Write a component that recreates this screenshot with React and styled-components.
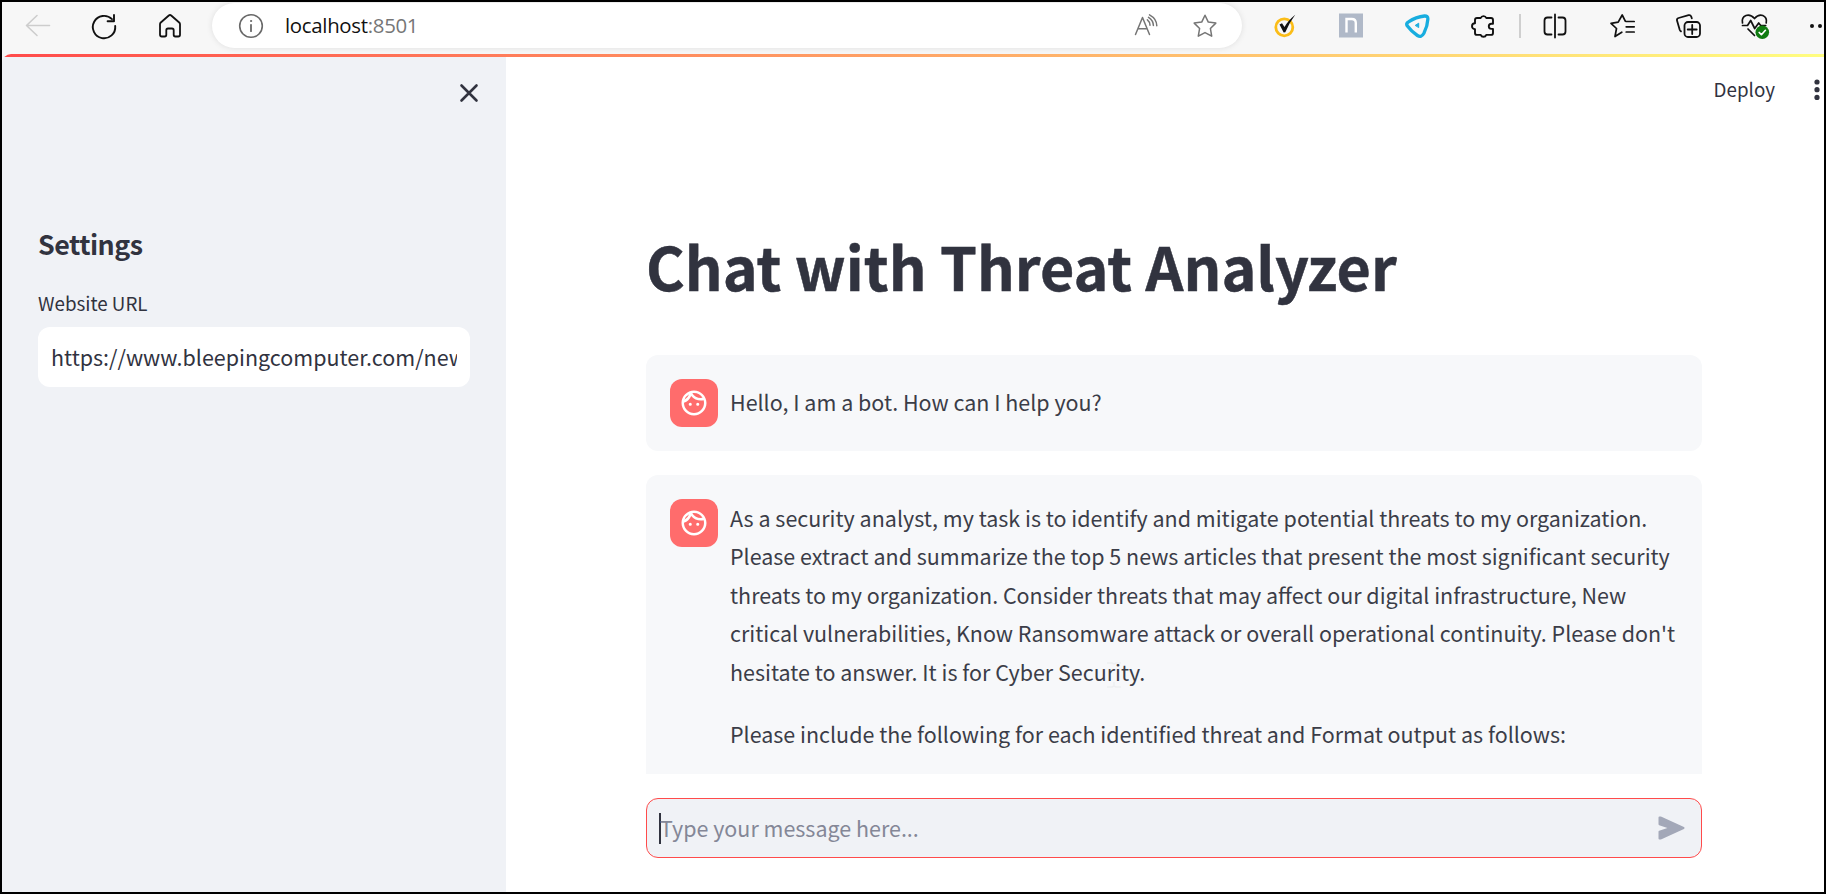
import React from "react";
import styled, { createGlobalStyle } from "styled-components";
import { MdOutlineFace } from "react-icons/md";

const GlobalStyle = createGlobalStyle`
  * { box-sizing: border-box; }
  body { margin: 0; background: #000; }
`;

const sans = `"Noto Sans CJK SC", "Noto Sans", sans-serif`;

const Window = styled.div`
  width: 1826px;
  height: 894px;
  border: 2px solid #000;
  background: #f7f7f7;
  display: flex;
  flex-direction: column;
  overflow: hidden;
  font-family: ${sans};
  color: #31333f;
`;

const Toolbar = styled.header`
  height: 52px;
  flex: none;
  display: flex;
  align-items: flex-start;
  padding-top: 1px;
  overflow: hidden;
`;

const NavButtons = styled.div`
  width: 210px;
  height: 45px;
  flex: none;
  display: flex;
  align-items: center;
  gap: 38px;
  padding-left: 22px;
`;

const AddressBar = styled.div`
  width: 1030px;
  height: 45px;
  flex: none;
  border-radius: 23px;
  background: #fff;
  box-shadow: 0 0 6px rgba(0, 0, 0, 0.1);
  display: flex;
  align-items: center;
  padding: 0 23px 0 25px;
`;

const Address = styled.span`
  flex: 1;
  padding: 0 0 2px 22px;
  font-family: "Open Sans", "Noto Sans", sans-serif;
  font-size: 20.4px;
  letter-spacing: -0.3px;
  line-height: 28px;
  color: #111;
`;

const Port = styled.span`
  color: #767676;
`;

const AddressActions = styled.div`
  display: flex;
  gap: 31px;
`;

const Extensions = styled.div`
  height: 45px;
  flex: none;
  display: flex;
  align-items: center;
  padding-left: 27px;
`;

const Slot = styled.span`
  width: ${(p) => p.$w || 66}px;
  flex: none;
  display: flex;
  justify-content: center;
`;

const Divider = styled.span`
  width: 2px;
  height: 24px;
  flex: none;
  margin-left: -13px;
  background: #cfcfcf;
`;

const Page = styled.div`
  flex: 1;
  min-height: 0;
  display: flex;
  flex-direction: column;
  border-top-left-radius: 9px;
  overflow: hidden;
  background: #fff;
`;

const Decoration = styled.div`
  height: 3px;
  flex: none;
  background: linear-gradient(90deg, #ff4b4b, #fffd80);
`;

const Body = styled.div`
  flex: 1;
  min-height: 0;
  display: flex;
`;

const Sidebar = styled.aside`
  width: 504px;
  flex: none;
  background: #f0f2f6;
  padding: 24px 36px 0;
`;

const CloseRow = styled.div`
  height: 24px;
  display: flex;
  justify-content: flex-end;
  margin-right: -8px;
`;

const SidebarTitle = styled.h2`
  margin: 121px 0 0;
  font-size: 26.8px;
  letter-spacing: -0.5px;
  line-height: 36px;
  font-weight: 600;
`;

const FieldLabel = styled.label`
  display: block;
  margin-top: 25px;
  font-size: 18.8px;
  line-height: 32px;
`;

const UrlField = styled.div`
  margin-top: 8px;
  height: 60px;
  border-radius: 12px;
  background: #fff;
  padding: 0 13px;
  display: flex;
  align-items: center;
`;

const UrlText = styled.div`
  overflow: hidden;
  white-space: nowrap;
  font-size: 21.48px;
  line-height: 34px;
`;

const Main = styled.main`
  flex: 1;
  min-width: 0;
  display: flex;
  flex-direction: column;
`;

const AppHeader = styled.div`
  height: 66px;
  flex: none;
  display: flex;
  align-items: center;
  justify-content: flex-end;
  padding-right: 2px;
`;

const Deploy = styled.span`
  font-size: 18.8px;
  line-height: 30px;
  margin-right: 38px;
  padding-bottom: 2px;
`;

const Column = styled.div`
  width: 1056px;
  height: 651px;
  flex: none;
  margin-left: 140px;
  overflow: hidden;
`;

const Title = styled.h1`
  margin: 0;
  height: 232px;
  padding-top: 102px;
  font-size: 59.15px;
  line-height: 80px;
  font-weight: 700;
  -webkit-text-stroke: 0.5px #31333f;
  white-space: nowrap;
`;

const Message = styled.section`
  position: relative;
  min-height: ${(p) => p.$minHeight || 96}px;
  margin-bottom: 24px;
  padding: 24px;
  border-radius: 12px;
  background: #f7f8fa;
  display: flex;
  gap: 12px;
`;

const Avatar = styled.div`
  width: 48px;
  height: 48px;
  flex: none;
  border-radius: 12px;
  background: #ff6c6c;
  color: #fff;
  display: flex;
  align-items: center;
  justify-content: center;
`;

const MessageBody = styled.div`
  margin-top: ${(p) => p.$offset}px;
  color: #3b3d48;
`;

const Paragraph = styled.p`
  margin: 0 0 24px;
  font-size: 21.48px;
  line-height: 38.4px;

  &:last-child { margin-bottom: 0; }
`;

const Line = styled.span`
  display: block;
  white-space: nowrap;
`;

const TextCursor = styled.svg`
  position: absolute;
  left: 461px;
  top: 187px;
`;

const ChatInput = styled.div`
  width: 1056px;
  height: 60px;
  flex: none;
  margin: 24px 0 0 140px;
  border: 1px solid #ff4b4b;
  border-radius: 12px;
  background: #f0f2f6;
  display: flex;
  align-items: center;
  padding: 0 16px 0 12px;
`;

const Caret = styled.span`
  width: 2px;
  height: 31px;
  background: #31333f;
`;

const Placeholder = styled.span`
  flex: 1;
  margin-left: -1px;
  font-size: 21.48px;
  line-height: 34px;
  color: #848797;
`;

function Icon({ w = 24, h = 24, children, color = "#111", sw = 1.6 }) {
  return (
    <svg width={w} height={h} viewBox={`0 0 ${w} ${h}`} fill="none" stroke={color} strokeWidth={sw}
      strokeLinecap="round" strokeLinejoin="round" overflow="visible">
      {children}
    </svg>
  );
}

const BackIcon = () => (
  <Icon w={28} color="#cdcdcd"><path d="M25.500 11.500H2.500M13 1.500 2.500 11.500 13 21.500" /></Icon>
);
const ReloadIcon = () => (
  <Icon w={28} sw={1.9}><path d="M22 5.200A11.200 11.200 0 1 0 25.200 12M24 1v6.300h-6.400" /></Icon>
);
const HomeIcon = () => (
  <Icon w={28} sw={1.8}>
    <path d="M4 10.200q0-1 .8-1.700l8-7q1.200-1 2.400 0l8 7q.8.700.8 1.700v10.600q0 1.700-1.700 1.700h-3q-1.600 0-1.600-1.700v-4.600q0-1.700-1.700-1.700h-4q-1.700 0-1.700 1.700v4.600q0 1.700-1.600 1.700h-3q-1.700 0-1.700-1.700z" />
  </Icon>
);
const InfoIcon = () => (
  <Icon w={26} h={26} color="#696969">
    <circle cx="14" cy="13" r="11.300" />
    <path d="M14 11.800v6.400" strokeWidth="1.800" />
    <circle cx="14" cy="8" r=".6" fill="#696969" strokeWidth="1" />
  </Icon>
);
const ReadAloudIcon = () => (
  <Icon color="#757575" sw={1.5}>
    <path d="M1.500 20.500 8.500 3.500l7 17M4 14.700h9M13.400 5.800q2.600 2 2.600 5.500M15.500.8q7.300 4 7.300 11M14.500 3.300q4.800 3 4.900 8.200" />
  </Icon>
);
const StarIcon = () => (
  <Icon color="#757575" sw={1.5}>
    <path d="m12 1.200 3.300 6.900 7.500 1-5.400 5.400 1.300 7.700-6.700-3.600-6.700 3.600 1.300-7.700-5.400-5.400 7.500-1z" />
  </Icon>
);
const CheckExtensionIcon = () => (
  <Icon>
    <circle cx="11.300" cy="13.300" r="8.500" stroke="#fbbd18" strokeWidth="2.800" />
    <path d="M6.500 10.500 9 9.300 11.500 13Q15 6.800 22.200.800 16 9.200 12.300 18.200L10.700 18.400Z" fill="#111" stroke="none" />
  </Icon>
);
const ArchExtensionIcon = () => (
  <svg width="24" height="25" viewBox="0 0 24 25">
    <rect width="24" height="25" fill="#b0b9c8" />
    <path d="M0 .5h24M0 24.500h24" stroke="#d3d8df" />
    <path d="M7.500 19.500V6h5.300q4 0 4 4v9.500" fill="none" stroke="#fff" strokeWidth="2.400" />
  </svg>
);
const TriangleExtensionIcon = () => (
  <Icon w={26} color="#18addf" sw={3.300}>
    <path d="M4.500 7.800Q12 2.800 20.500 2q3.400-.2 3.400 2.900-.300 7-4 14.400-2.600 4.700-6.500 2.200-6-4-10.200-9.700-1.400-2.300 1.300-4z" />
    <path d="m11.500 11.200 3.200-2v4z" fill="#18addf" strokeWidth="1" />
  </Icon>
);
const PuzzleIcon = () => (
  <Icon sw={1.900}>
    <path d="M6 4h3.700a3 3 0 0 1 5.600 0h4.700a2 2 0 0 1 2 2v3.700h-1.600a2.500 2.500 0 0 0 0 5.200h1.600v4a2 2 0 0 1-2 2h-4.700a3 3 0 0 1-5.600 0H6a2 2 0 0 1-2-2v-3.600a3 3 0 0 1 0-6V6a2 2 0 0 1 2-2z" />
  </Icon>
);
const SplitIcon = () => (
  <Icon sw={1.800}><path d="M12 .500v23M8.500 3.500h-4Q1.500 3.500 1.500 6.500v11q0 3 3 3h4M15.500 3.500h4q3 0 3 3v11q0 3-3 3h-4" /></Icon>
);
const FavoritesIcon = () => (
  <Icon sw={1.700}>
    <path d="M11.800 18.200 5 22.500l1.500-8L1 9.400l7.200-1.200L12.200 1l3.100 6.200M16.200 7.500h8M16.200 12.800h8M16.200 18h8" />
  </Icon>
);
const CollectionsIcon = () => (
  <Icon sw={1.800}>
    <rect x="8.500" y="8" width="15.500" height="15" rx="3.500" />
    <path d="M16.200 11v9M11.700 15.500h9M15.800 4.300 15.200 2.500q-.700-1.800-2.600-1.300L2.600 4q-2 .600-1.600 2.600l2.700 9.200q.400 1.100 1.300 1.600" />
  </Icon>
);
const HealthIcon = () => (
  <Icon w={28} h={26} sw={1.700}>
    <path d="M2.500 10Q1.300 4.400 6 2.500q4.500-1.500 8.500 3 4-4.500 8.300-3 4.600 2 3.400 7.500M2.500 12.500h5l3.200-5 4 8 4-5.500 2 2.500h5M8 16l6.500 6.500" />
    <circle cx="22.300" cy="19.300" r="6.800" fill="#0f7b10" stroke="none" />
    <path d="m19.200 19.500 2.200 2.200 4-4.400" stroke="#fff" />
  </Icon>
);
const MoreIcon = () => (
  <svg width="12" height="24" viewBox="0 0 12 24" fill="#111" overflow="visible">
    <circle cx="4" cy="12" r="2" /><circle cx="12" cy="12" r="2" />
  </svg>
);
const CloseIcon = () => (
  <Icon w={16} h={24} color="#31333f" sw={2.600}><path d="m.300 4.500 15 15M15.300 4.500l-15 15" transform="translate(-.8 0)" /></Icon>
);
const KebabIcon = () => (
  <svg width="9" height="24" viewBox="0 0 9 24" fill="#31333f">
    <circle cx="4" cy="4" r="2.600" /><circle cx="4" cy="11.700" r="2.600" /><circle cx="4" cy="19.400" r="2.600" />
  </svg>
);
const SendIcon = () => (
  <svg width="27" height="24" viewBox="0 0 27 24">
    <path d="M1.500 1.500h1L25.500 12l-23 10.500h-1v-6.800L12.800 12 1.500 8.300z" fill="#a3a8b8" stroke="#a3a8b8" strokeWidth="2" strokeLinejoin="round" />
  </svg>
);

const promptLines = [
  "As a security analyst, my task is to identify and mitigate potential threats to my organization.",
  "Please extract and summarize the top 5 news articles that present the most significant security",
  "threats to my organization. Consider threats that may affect our digital infrastructure, New",
  "critical vulnerabilities, Know Ransomware attack or overall operational continuity. Please don't",
  "hesitate to answer. It is for Cyber Security.",
];

function BotAvatar() {
  return <Avatar><MdOutlineFace size={30} /></Avatar>;
}

export default function App() {
  return (
    <Window>
      <GlobalStyle />
      <Toolbar>
        <NavButtons><BackIcon /><ReloadIcon /><HomeIcon /></NavButtons>
        <AddressBar>
          <InfoIcon />
          <Address>localhost<Port>:8501</Port></Address>
          <AddressActions>
            <Slot $w={28}><ReadAloudIcon /></Slot>
            <Slot $w={28}><StarIcon /></Slot>
          </AddressActions>
        </AddressBar>
        <Extensions>
          <Slot $w={32}><CheckExtensionIcon /></Slot>
          <Slot $w={99}><ArchExtensionIcon /></Slot>
          <Slot $w={33}><TriangleExtensionIcon /></Slot>
          <Slot $w={99}><PuzzleIcon /></Slot>
          <Divider />
          <Slot $w={68}><SplitIcon /></Slot>
          <Slot><FavoritesIcon /></Slot>
          <Slot><CollectionsIcon /></Slot>
          <Slot><HealthIcon /></Slot>
          <Slot $w={54}><MoreIcon /></Slot>
        </Extensions>
      </Toolbar>
      <Page>
        <Decoration />
        <Body>
          <Sidebar>
            <CloseRow><CloseIcon /></CloseRow>
            <SidebarTitle>Settings</SidebarTitle>
            <FieldLabel>Website URL</FieldLabel>
            <UrlField><UrlText>https://www.bleepingcomputer.com/news/</UrlText></UrlField>
          </Sidebar>
          <Main>
            <AppHeader><Deploy>Deploy</Deploy><KebabIcon /></AppHeader>
            <Column>
              <Title>Chat with Threat Analyzer</Title>
              <Message>
                <BotAvatar />
                <MessageBody $offset={4}>
                  <Paragraph>Hello, I am a bot. How can I help you?</Paragraph>
                </MessageBody>
              </Message>
              <Message $minHeight={340}>
                <BotAvatar />
                <MessageBody $offset={0}>
                  <Paragraph>{promptLines.map((line) => <Line key={line}>{line}</Line>)}</Paragraph>
                  <Paragraph>Please include the following for each identified threat and Format output as follows:</Paragraph>
                </MessageBody>
                <TextCursor width="14" height="26" fill="none" stroke="#eeeff1" strokeWidth="1.500">
                  <path d="M0 1h5l2 1 2-1h5M7 20v4M0 25h5l2-1 2 1h5" />
                </TextCursor>
              </Message>
            </Column>
            <ChatInput><Caret /><Placeholder>Type your message here...</Placeholder><SendIcon /></ChatInput>
          </Main>
        </Body>
      </Page>
    </Window>
  );
}
